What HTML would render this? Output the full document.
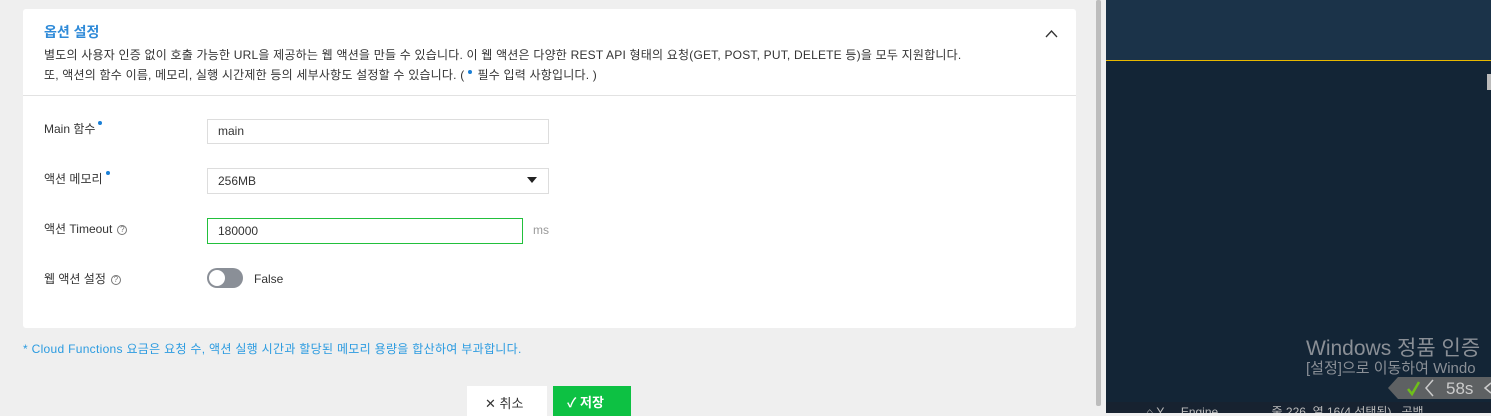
<!DOCTYPE html>
<html><head><meta charset="utf-8"><style>
*{margin:0;padding:0;box-sizing:border-box}
body{width:1491px;height:413px;overflow:hidden;background:#efefef;font-family:"Liberation Sans","Noto Sans CJK KR",sans-serif;position:relative;color:#333}
.abs{position:absolute}
.card{left:23px;top:9px;width:1053px;height:319px;background:#fff;border-radius:3px}
.t{font-size:12px;white-space:nowrap}
.lbl{left:44px;font-size:12px;color:#333}
.dot{display:inline-block;width:4px;height:4px;border-radius:50%;background:#1a7fd6;vertical-align:top;margin-left:3px;margin-top:1px}
.inp{border:1px solid #ddd;background:#fff;font-size:12px;padding-left:10px;line-height:23px}
.q{display:inline-block;width:10px;height:10px;border:1px solid #777;border-radius:50%;font-size:8px;line-height:8px;text-align:center;color:#777;margin-left:5px;vertical-align:middle}
</style></head><body>
<div class="abs card"></div>
<div class="abs" style="left:44px;top:22px;font-size:14px;font-weight:bold;color:#2e8ad8">옵션 설정</div>
<svg class="abs" style="left:1045px;top:30px" width="13" height="8"><path d="M1 7 L6.5 1 L12 7" fill="none" stroke="#333" stroke-width="1.3"/></svg>
<div class="abs t" style="left:44px;top:46px;letter-spacing:0.2px">별도의 사용자 인증 없이 호출 가능한 URL을 제공하는 웹 액션을 만들 수 있습니다. 이 웹 액션은 다양한 REST API 형태의 요청(GET, POST, PUT, DELETE 등)을 모두 지원합니다.</div>
<div class="abs t" style="left:44px;top:66px;letter-spacing:0.2px">또, 액션의 함수 이름, 메모리, 실행 시간제한 등의 세부사항도 설정할 수 있습니다. ( <span class="dot" style="margin:4px 2px 0 0"></span> 필수 입력 사항입니다. )</div>
<div class="abs" style="left:23px;top:95px;width:1053px;height:1px;background:#e2e2e2"></div>

<div class="abs lbl" style="top:120px">Main 함수<span class="dot"></span></div>
<div class="abs inp" style="left:207px;top:119px;width:342px;height:25px">main</div>

<div class="abs lbl" style="top:170px">액션 메모리<span class="dot"></span></div>
<div class="abs inp" style="left:207px;top:168px;width:342px;height:26px;line-height:24px">256MB</div>
<svg class="abs" style="left:527px;top:177px" width="10" height="7"><path d="M0 0 L10 0 L5 6Z" fill="#222"/></svg>

<div class="abs lbl" style="top:220px">액션 Timeout<span class="q">?</span></div>
<div class="abs inp" style="left:207px;top:218px;width:316px;height:26px;border-color:#22c03c;line-height:24px">180000</div>
<div class="abs t" style="left:533px;top:223px;color:#999">ms</div>

<div class="abs lbl" style="top:270px">웹 액션 설정<span class="q">?</span></div>
<div class="abs" style="left:207px;top:268px;width:36px;height:20px;border-radius:10px;background:#8a8f97"></div>
<div class="abs" style="left:209px;top:270px;width:16px;height:16px;border-radius:50%;background:#fff"></div>
<div class="abs t" style="left:254px;top:272px">False</div>

<div class="abs t" style="left:23px;top:340px;color:#2b9be0;letter-spacing:0.3px">* Cloud Functions 요금은 요청 수, 액션 실행 시간과 할당된 메모리 용량을 합산하여 부과합니다.</div>

<div class="abs" style="left:467px;top:386px;width:80px;height:30px;background:#fff"></div>
<div class="abs" style="left:485px;top:393px;font-size:13px">✕ 취소</div>
<div class="abs" style="left:553px;top:386px;width:78px;height:30px;background:#0dc143"></div>
<div class="abs" style="left:567px;top:392px;font-size:13px;color:#fff;font-weight:bold">✓ 저장</div>

<div class="abs" style="left:1096px;top:0;width:5px;height:406px;background:#bdbdbd;border-radius:2px"></div>
<div class="abs" style="left:1106px;top:0;width:385px;height:60px;background:#1b3349"></div>
<div class="abs" style="left:1106px;top:60px;width:385px;height:1px;background:#e8b800"></div>
<div class="abs" style="left:1106px;top:61px;width:385px;height:341px;background:#132536"></div>
<div class="abs" style="left:1487px;top:74px;width:4px;height:16px;background:#bbb"></div>
<div class="abs" style="left:1306px;top:332px;font-size:21px;color:#8a8f96;white-space:nowrap">Windows 정품 인증</div>
<div class="abs" style="left:1306px;top:357px;font-size:15px;color:#8a8f96;white-space:nowrap">[설정]으로 이동하여 Windo</div>
<svg class="abs" style="left:1388px;top:377px" width="103" height="22"><path d="M10 0 H103 V22 H10 L0 11Z" fill="#5e6163"/><path d="M20 12 L24 17 L31 5" stroke="#6fbf1a" stroke-width="2.5" fill="none"/><path d="M45 3 L38 11 L45 19" stroke="#ccc" stroke-width="1.5" fill="none"/><path d="M103 6 L97 11 L103 16" stroke="#ccc" stroke-width="1.5" fill="none"/><text x="58" y="17" font-size="17" fill="#ccc" font-family="Liberation Sans">58s</text></svg>
<div class="abs" style="left:1106px;top:402px;width:385px;height:11px;background:#172230;overflow:hidden;font-size:12px;color:#bbb;white-space:nowrap;padding-left:40px;line-height:20px">⌂ Y ... Engine ...&nbsp;&nbsp;&nbsp;&nbsp;&nbsp;&nbsp;&nbsp;&nbsp;&nbsp;&nbsp;&nbsp;&nbsp;줄 226, 열 16(4 선택됨)&nbsp;&nbsp;&nbsp;공백</div>
</body></html>
